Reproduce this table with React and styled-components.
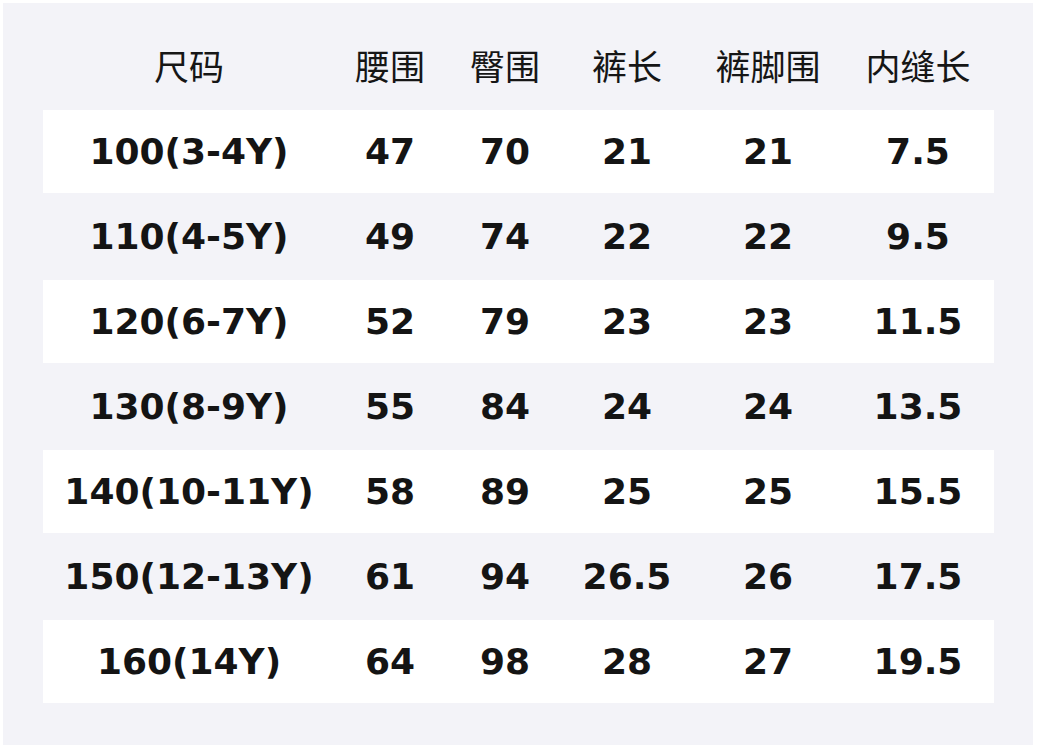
import styled, { createGlobalStyle } from "styled-components";

const GlobalStyle = createGlobalStyle`
  html, body {
    margin: 0;
    padding: 0;
    background: #ffffff;
  }
`;

const columns = ["尺码", "腰围", "臀围", "裤长", "裤脚围", "内缝长"];

const rows = [
  ["100(3-4Y)", "47", "70", "21", "21", "7.5"],
  ["110(4-5Y)", "49", "74", "22", "22", "9.5"],
  ["120(6-7Y)", "52", "79", "23", "23", "11.5"],
  ["130(8-9Y)", "55", "84", "24", "24", "13.5"],
  ["140(10-11Y)", "58", "89", "25", "25", "15.5"],
  ["150(12-13Y)", "61", "94", "26.5", "26", "17.5"],
  ["160(14Y)", "64", "98", "28", "27", "19.5"],
];

const App = () => {
  return (
    <>
      <GlobalStyle />
      <Panel>
        <HeadRow>
          {columns.map((c) => (
            <HeadCell key={c}>{c}</HeadCell>
          ))}
        </HeadRow>
        {rows.map((r, i) => (
          <Row key={r[0]} $striped={i % 2 === 0}>
            {r.map((v, j) => (
              <Cell key={j}>{v}</Cell>
            ))}
          </Row>
        ))}
      </Panel>
    </>
  );
};

const Panel = styled.div`
  display: flex;
  flex-direction: column;
  margin: 3px 4px 3px 3px;
  height: 742px;
  box-sizing: border-box;
  padding: 21px 39px 0 40px;
  background-color: #f3f3f8;
`;

const grid = `
  display: grid;
  grid-template-columns: 292px 110px 120px 124px 158px 1fr;
  padding-right: 5px;
  align-items: center;
  justify-items: center;
  flex-shrink: 0;
`;

const HeadRow = styled.div`
  ${grid}
  height: 85px;
  box-sizing: border-box;
  padding-bottom: 4px;
`;

const HeadCell = styled.div`
  font-family: "Noto Sans CJK SC", "Noto Sans", sans-serif;
  font-size: 35px;
  font-weight: 400;
  color: #161616;
`;

const Row = styled.div`
  ${grid}
  height: 83px;
  margin: 1px 0;
  background-color: ${(p) => (p.$striped ? "#ffffff" : "transparent")};
`;

const Cell = styled.div`
  font-family: "DejaVu Sans", "Liberation Sans", sans-serif;
  font-size: 36px;
  font-weight: 700;
  color: #141414;
`;

export default App;
